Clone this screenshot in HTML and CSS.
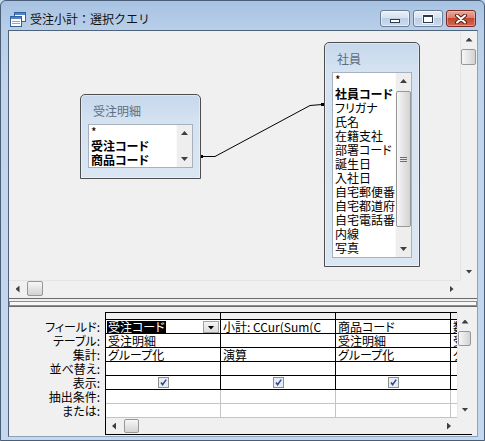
FILE: index.html
```html
<!DOCTYPE html>
<html lang="ja">
<head>
<meta charset="utf-8">
<title>受注小計：選択クエリ</title>
<link rel="stylesheet" href="styles.css">
</head>
<body>
<div class="window">
  <div class="titlebar">
    <svg class="app-icon" viewBox="0 0 16 15" width="16" height="15">
      <rect x="4.5" y="0.5" width="11" height="9" fill="#fff" stroke="#35609e"/>
      <rect x="5" y="1" width="10" height="2" fill="#4f86c9"/>
      <rect x="0.5" y="4.5" width="11" height="10" fill="#fff" stroke="#35609e"/>
      <rect x="1" y="5" width="10" height="2" fill="#4f86c9"/>
      <path d="M2 9.5h8M2 11.5h8" stroke="#8aa6cc"/>
    </svg>
    <span class="title">受注小計：選択クエリ</span>
    <div class="caption-buttons">
      <div class="cbtn"><span class="g-min"></span></div>
      <div class="cbtn"><span class="g-max"></span></div>
      <div class="cbtn close">
        <svg width="14" height="10" viewBox="0 0 14 10">
          <path d="M3 1.5L11 8.5M11 1.5L3 8.5" stroke="#5b1e15" stroke-width="4" stroke-linecap="round"/>
          <path d="M3 1.5L11 8.5M11 1.5L3 8.5" stroke="#fff" stroke-width="2" stroke-linecap="round"/>
        </svg>
      </div>
    </div>
  </div>

  <div class="client">
    <div class="upper">
      <div class="canvas">
        <svg class="joins" width="451" height="249">
          <polyline points="193,125.5 206,125.5 301,74.5 313,73.5" fill="none" stroke="#000" stroke-width="1"/>
          <rect x="191" y="124" width="3" height="3" fill="#000"/>
          <rect x="312" y="72" width="3" height="3" fill="#000"/>
        </svg>
        <div class="tbl t1">
          <div class="tbl-title">受注明細</div>
          <div class="list">
            <div class="items">
              <div>*</div>
              <div class="pk">受注コード</div>
              <div class="pk">商品コード</div>
            </div>
            <div class="lsb">
              <div class="arr up"></div>
              <div class="ltrack"></div>
              <div class="arr down"></div>
            </div>
          </div>
        </div>
        <div class="tbl t2">
          <div class="tbl-title">社員</div>
          <div class="list">
            <div class="items">
              <div>*</div>
              <div class="pk">社員コード</div>
              <div>フリガナ</div>
              <div>氏名</div>
              <div>在籍支社</div>
              <div>部署コード</div>
              <div>誕生日</div>
              <div>入社日</div>
              <div>自宅郵便番号</div>
              <div>自宅都道府県</div>
              <div>自宅電話番号</div>
              <div>内線</div>
              <div>写真</div>
            </div>
            <div class="lsb">
              <div class="arr up"></div>
              <div class="ltrack"><div class="lthumb"><span class="grip"></span></div></div>
              <div class="arr down"></div>
            </div>
          </div>
        </div>
      </div>
      <div class="sb v">
        <div class="arr up"></div>
        <div class="track"><div class="thumb"></div></div>
        <div class="arr down"></div>
      </div>
      <div class="sb h">
        <div class="arr left"></div>
        <div class="track"><div class="thumb"></div></div>
        <div class="arr right"></div>
      </div>
      <div class="corner"></div>
    </div>

    <div class="splitter">
      <div class="split-line"></div>
      <div class="split-bar"></div>
    </div>

    <div class="lower">
      <div class="labels">
        <div>フィールド:</div>
        <div>テーブル:</div>
        <div>集計:</div>
        <div>並べ替え:</div>
        <div>表示:</div>
        <div>抽出条件:</div>
        <div>または:</div>
      </div>
      <div class="qbe">
        <div class="cells">
          <div class="c hd"></div><div class="c hd"></div><div class="c hd"></div><div class="c hd e"></div>

          <div class="c f1"><span class="sel">受注コード</span><span class="dd"></span></div>
          <div class="c">小計: CCur(Sum(C</div>
          <div class="c">商品コード</div>
          <div class="c e">数量</div>

          <div class="c">受注明細</div>
          <div class="c"></div>
          <div class="c">受注明細</div>
          <div class="c e">受注明細</div>

          <div class="c">グループ化</div>
          <div class="c">演算</div>
          <div class="c">グループ化</div>
          <div class="c e">グループ化</div>

          <div class="c"></div><div class="c"></div><div class="c"></div><div class="c e"></div>

          <div class="c chk"><svg class="cb" width="11" height="11" viewBox="0 0 11 11"><rect x="0.5" y="0.5" width="10" height="10" fill="#e9ecf1" stroke="#8e8f8f"/><path d="M3 5.5L4.6 7.6L8.2 2.6" fill="none" stroke="#2b4a9c" stroke-width="1.6"/></svg></div>
          <div class="c chk"><svg class="cb" width="11" height="11" viewBox="0 0 11 11"><rect x="0.5" y="0.5" width="10" height="10" fill="#e9ecf1" stroke="#8e8f8f"/><path d="M3 5.5L4.6 7.6L8.2 2.6" fill="none" stroke="#2b4a9c" stroke-width="1.6"/></svg></div>
          <div class="c chk"><svg class="cb" width="11" height="11" viewBox="0 0 11 11"><rect x="0.5" y="0.5" width="10" height="10" fill="#e9ecf1" stroke="#8e8f8f"/><path d="M3 5.5L4.6 7.6L8.2 2.6" fill="none" stroke="#2b4a9c" stroke-width="1.6"/></svg></div>
          <div class="c e"></div>

          <div class="c g"></div><div class="c g"></div><div class="c g"></div><div class="c g e"></div>
          <div class="c g"></div><div class="c g"></div><div class="c g"></div><div class="c g e"></div>
        </div>
        <div class="sb v sm">
          <div class="arr up"></div>
          <div class="track"><div class="thumb"></div></div>
          <div class="arr down"></div>
        </div>
        <div class="sb h sm">
          <div class="arr left"></div>
          <div class="track"><div class="thumb"></div></div>
          <div class="arr right"></div>
        </div>
        <div class="corner"></div>
      </div>
    </div>
  </div>
</div>
</body>
</html>
```

FILE: styles.css
```css
* { box-sizing: border-box; }
html, body { margin: 0; padding: 0; }
body {
  width: 485px;
  height: 441px;
  overflow: hidden;
  font-family: "Noto Sans CJK JP", "Noto Sans", sans-serif;
  font-size: 12px;
  color: #000;
  background: #c2d6ed;
}

.window {
  width: 485px;
  height: 441px;
  display: flex;
  flex-direction: column;
  border: 1px solid #4a5e78;
  border-radius: 6px 6px 0 0;
  background: linear-gradient(180deg, #a7c2e2 0, #b8cfe9 29px, #c0d5ec 80px, #c4d8ee 100%);
}

/* title bar */
.titlebar {
  height: 29px;
  flex: none;
  display: flex;
  align-items: flex-start;
}
.app-icon { flex: none; margin: 11px 0 0 9px; }
.title {
  margin: 10px 0 0 4px;
  line-height: 15px;
  white-space: nowrap;
  color: #111;
}
.caption-buttons {
  margin: 9px 8px 0 auto;
  display: flex;
  gap: 3px;
}
.cbtn {
  width: 30px;
  height: 17px;
  border: 1px solid #6a7d97;
  border-radius: 3px;
  display: flex;
  align-items: center;
  justify-content: center;
  background: linear-gradient(180deg, #e9f0f8 0, #d6e2f0 45%, #bdcfe5 50%, #cadbef 100%);
  box-shadow: inset 0 0 0 1px rgba(255,255,255,0.55);
}
.cbtn.close {
  border-color: #7a2b23;
  background: linear-gradient(180deg, #eaa99c 0, #d97f6e 45%, #c2472f 50%, #d06a54 100%);
  box-shadow: inset 0 0 0 1px rgba(255,200,190,0.45);
}
.g-min {
  width: 10px;
  height: 4px;
  margin-top: 5px;
  border: 1px solid #2e3a4a;
  background: #fff;
}
.g-max {
  width: 10px;
  height: 8px;
  border: 1px solid #2e3a4a;
  border-top-width: 2px;
  background: #fff;
  box-shadow: 0 0 0 1px rgba(255,255,255,0.7);
}

/* client */
.client {
  flex: 1;
  min-height: 0;
  margin: 0 6px 3px 7px;
  border: 1px solid;
  border-color: #4f6279 #8ea2bb #8ea2bb #4f6279;
  background: #f0f0f0;
  display: flex;
  flex-direction: column;
}

.upper {
  height: 266px;
  flex: none;
  display: grid;
  grid-template-columns: 1fr 17px;
  grid-template-rows: 1fr 17px;
}
.canvas {
  position: relative;
  overflow: hidden;
  background: #f0f0f0;
}
.joins { position: absolute; left: 0; top: 0; }

/* field list windows */
.tbl {
  position: absolute;
  display: flex;
  flex-direction: column;
  padding: 0 7px 8px;
  border: 1px solid #4e4e4e;
  border-radius: 5px 5px 0 0;
  background: linear-gradient(180deg, #c7d8ec 0, #d5e2f1 28px, #dbe6f3 100%);
  box-shadow: inset 0 0 0 1px rgba(255,255,255,0.4);
}
.t1 { left: 71px; top: 63px; width: 121px; height: 85px; padding-bottom: 10px; }
.t2 { left: 315px; top: 11px; width: 96px; height: 225px; }
.tbl-title {
  height: 29px;
  flex: none;
  padding: 9px 0 0 5px;
  line-height: 14px;
  color: #5d6d82;
  white-space: nowrap;
}
.list {
  flex: 1;
  min-height: 0;
  display: flex;
  border: 1px solid #a7b1bd;
  background: #fff;
}
.items {
  flex: 1;
  min-width: 0;
  padding-left: 2px;
  overflow: hidden;
}
.items div {
  height: 14px;
  line-height: 14px;
  white-space: nowrap;
  font-feature-settings: "palt";
}
.items .pk { font-weight: bold; }

.lsb {
  width: 16px;
  flex: none;
  display: flex;
  flex-direction: column;
  background: #eeeeee;
  border-left: 1px solid #fafafa;
}
.lsb .arr { height: 16px; }
.ltrack { flex: 1; display: flex; flex-direction: column; }
.lthumb {
  height: 136px;
  margin: 2px 0 0 0;
  border: 1px solid #979797;
  border-radius: 2px;
  background: linear-gradient(90deg, #f7f7f7, #e4e4e4 50%, #d3d3d3);
  display: flex;
  align-items: center;
  justify-content: center;
}
.grip {
  width: 7px;
  height: 1px;
  margin-top: -4px;
  background: #6e6e6e;
  box-shadow: 0 2px 0 #6e6e6e, 0 4px 0 #6e6e6e;
}

/* scrollbars */
.sb { background: #f0f0f0; display: flex; }
.sb.v { flex-direction: column; border-left: 1px solid #e4e4e4; }
.sb.h { flex-direction: row; border-top: 1px solid #e4e4e4; }
.arr {
  flex: none;
  display: flex;
  align-items: center;
  justify-content: center;
}
.sb.v .arr { height: 17px; }
.sb.h .arr { width: 17px; }
.arr::before { content: ""; background: #3f3f3f; }
.arr.up::before { width: 7px; height: 4px; clip-path: polygon(50% 0, 100% 100%, 0 100%); }
.arr.down::before { width: 7px; height: 4px; clip-path: polygon(0 0, 100% 0, 50% 100%); }
.arr.left::before { width: 4px; height: 7px; clip-path: polygon(100% 0, 100% 100%, 0 50%); }
.arr.right::before { width: 4px; height: 7px; clip-path: polygon(0 0, 100% 50%, 0 100%); }
.track { flex: 1; display: flex; }
.sb.v .track { flex-direction: column; }
.thumb {
  flex: none;
  border: 1px solid #979797;
  border-radius: 2px;
}
.sb.v .thumb {
  height: 16px;
  margin: 1px 1px 0 0;
  background: linear-gradient(90deg, #f7f7f7, #e4e4e4 50%, #d3d3d3);
}
.sb.h .thumb {
  width: 16px;
  margin: 0 0 1px 1px;
  background: linear-gradient(180deg, #f7f7f7, #e4e4e4 50%, #d3d3d3);
}
.corner { background: #f0f0f0; }

/* splitter */
.splitter {
  height: 10px;
  flex: none;
  display: flex;
  flex-direction: column;
  padding-top: 1px;
  border-bottom: 1px solid #6a6a6a;
}
.split-line { height: 1px; background: #6a6a6a; }
.split-bar {
  margin-top: 2px;
  height: 5px;
  border: 1px solid #8e8e8e;
  background: #f8f8f8;
}

/* QBE grid */
.lower {
  flex: 1;
  min-height: 0;
  display: flex;
}
.labels {
  width: 96px;
  flex: none;
  padding: 13px 5px 0 0;
}
.labels div {
  height: 14px;
  line-height: 14px;
  text-align: right;
  white-space: nowrap;
  font-feature-settings: "palt";
}
.qbe {
  margin-top: 5px;
  width: 367px;
  height: 123px;
  border-left: 1px solid #000;
  border-bottom: 1px solid #000;
  display: grid;
  grid-template-columns: 1fr 15px;
  grid-template-rows: 106px 16px;
}
.cells {
  display: grid;
  grid-template-columns: 115px 115px 115px 6px;
  grid-template-rows: 7px repeat(7, 14px);
  border-top: 1px solid #000;
  background: #fff;
}
.c {
  border-right: 1px solid #000;
  border-bottom: 1px solid #000;
  padding-left: 2px;
  line-height: 13px;
  white-space: nowrap;
  overflow: hidden;
  font-feature-settings: "palt";
}
.c.hd { background: #f0f0f0; }
.c.e { border-right: none; }
.c.g { border-color: #c4c4c4; }
.c.f1 {
  display: flex;
  align-items: center;
  padding-left: 1px;
}
.sel {
  background: #000;
  color: #fff;
  line-height: 12px;
  padding: 0 1px;
}
.dd {
  margin-left: auto;
  margin-right: 1px;
  width: 16px;
  height: 12px;
  flex: none;
  border: 1px solid #a2a2a2;
  background: linear-gradient(180deg, #f4f4f4, #dcdcdc);
  display: flex;
  align-items: flex-end;
  justify-content: center;
  padding-bottom: 2px;
}
.dd::before {
  content: "";
  width: 7px;
  height: 4px;
  background: #000;
  clip-path: polygon(0 0, 100% 0, 50% 100%);
}
.c.chk {
  display: flex;
  align-items: center;
  justify-content: center;
  padding: 0;
}
.cb { display: block; }

.sb.sm.v { margin-top: 1px; border-left: 1px solid #e8e8e8; }
.sb.sm.v .arr { height: 17px; }
.sb.sm.h { border-top: none; }
.sb.sm.h .arr { width: 16px; }
.sb.sm.h .thumb { width: 15px; margin: 1px 0 1px 2px; }
.sb.sm.v .thumb { height: 15px; margin: 1px 1px 0 0; }
```
